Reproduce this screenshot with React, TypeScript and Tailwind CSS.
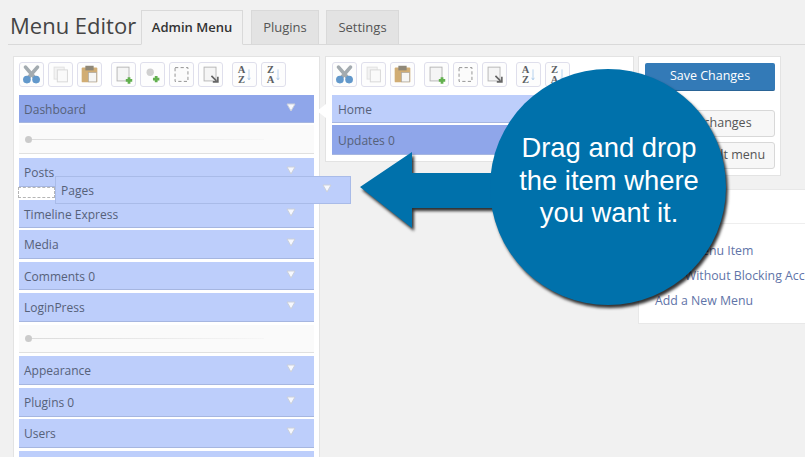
const sans = "font-['Open_Sans','Noto_Sans',sans-serif]";

function Scissors() {
  return (
    <svg viewBox="0 0 25 25" className="w-[25px] h-[25px]">
      <path d="M6 4.5l10 11.5M19 4.5L9 16" stroke="#a3abb0" strokeWidth="4" strokeLinecap="round" />
      <circle cx="7.5" cy="18" r="4.2" fill="#6298cb" />
      <circle cx="17.5" cy="18" r="4.2" fill="#6298cb" />
    </svg>
  );
}

function Copy() {
  return (
    <svg viewBox="0 0 25 25" className="w-[25px] h-[25px]">
      <rect x="5.5" y="4.5" width="11" height="13" fill="#f3f3f3" stroke="#e0e0e0" />
      <rect x="9" y="7.5" width="11" height="13" fill="#fafafa" stroke="#d6d6d6" />
    </svg>
  );
}

function Paste() {
  return (
    <svg viewBox="0 0 25 25" className="w-[25px] h-[25px]">
      <rect x="4" y="5" width="17" height="16" rx="1" fill="#d1ad74" />
      <rect x="8" y="3" width="9" height="5" fill="#8f8878" />
      <rect x="11.5" y="10.5" width="8.5" height="10" fill="#f6f6f4" stroke="#a3a3a3" strokeWidth="0.6" />
    </svg>
  );
}

function NewPage() {
  return (
    <svg viewBox="0 0 25 25" className="w-[25px] h-[25px]">
      <rect x="5.5" y="4.5" width="13" height="15" fill="#f5f5f5" stroke="#b4b4b4" />
      <path d="M15 19h7M18.5 15.5v7" stroke="#62b04e" strokeWidth="3" />
    </svg>
  );
}

function NewSeparator() {
  return (
    <svg viewBox="0 0 25 25" className="w-[25px] h-[25px]">
      <circle cx="10" cy="10" r="4" fill="#d0d0d0" />
      <path d="M13 17.5h7M16.5 14v7" stroke="#62b04e" strokeWidth="3" />
    </svg>
  );
}

function Dashed() {
  return (
    <svg viewBox="0 0 25 25" className="w-[25px] h-[25px]">
      <rect x="5.5" y="5" width="14" height="15" fill="#fbfbfb" stroke="#8c8c8c" strokeDasharray="3.5 2.5" />
    </svg>
  );
}

function MovePage() {
  return (
    <svg viewBox="0 0 25 25" className="w-[25px] h-[25px]">
      <rect x="5.5" y="4.5" width="13" height="15" fill="#f5f5f5" stroke="#b4b4b4" />
      <path d="M13.5 14l5.5 5.5M20.5 15v5.5H15" stroke="#666" strokeWidth="1.8" fill="none" />
    </svg>
  );
}

function Sort({ top, bottom }: { top: string; bottom: string }) {
  return (
    <div className="w-[25px] h-[25px] flex items-center justify-center gap-[2px]">
      <div className="flex flex-col items-center font-['Liberation_Serif',serif] font-bold text-[10.5px] leading-[10px] text-[#5c5f63]">
        <span>{top}</span>
        <span>{bottom}</span>
      </div>
      <svg viewBox="0 0 5 16" className="w-[4px] h-[16px]">
        <path d="M2.5 1v13M.8 11.5l1.7 2.5 1.7-2.5" stroke="#a5c6ea" strokeWidth="1" fill="none" />
      </svg>
    </div>
  );
}

function Tool({ children, last }: { children: React.ReactNode; last?: boolean }) {
  return (
    <div className={`w-[25px] h-[25px] border border-[#dfdfec] rounded-[3px] bg-[#fdfdfd] flex items-center justify-center overflow-hidden ${last ? "mr-[9px]" : "mr-[4px]"}`}>
      {children}
    </div>
  );
}

function Chevron() {
  return (
    <svg viewBox="0 0 10 9" className="w-[10px] h-[9px] shrink-0 -mt-[3px]">
      <path d="M1 1h8L5 8z" fill="#f6f8fe" stroke="#cbd0da" strokeWidth="1" strokeLinejoin="round" />
    </svg>
  );
}

function Item({ label, className, chevron = true }: { label: string; className: string; chevron?: boolean }) {
  return (
    <div className={`flex items-center justify-between pr-[18px] border-b border-[#a6b6e0] text-[12px] text-[#566179] ${className}`}>
      <span className="pt-[2px]">{label}</span>
      {chevron && <Chevron />}
    </div>
  );
}

function SliderBox({ className }: { className: string }) {
  return (
    <div className={`flex items-center pl-[6px] pr-[50px] bg-[#fafafa] border-b border-[#e0e0e0] ${className}`}>
      <div className="w-[7px] h-[7px] rounded-full bg-[#cbcbcb] shrink-0" />
      <div className="h-px flex-1 bg-linear-to-r from-[#dcdcdc] to-[#f6f6f6]" />
    </div>
  );
}

function SideButton({ label, className }: { label: string; className: string }) {
  return (
    <div className={`flex items-center justify-center border border-[#d8d8d8] rounded-[3px] bg-[#f7f7f7] text-[12.5px] text-[#555] ${className}`}>
      {label}
    </div>
  );
}

function Tab({ label, active, className }: { label: string; active?: boolean; className: string }) {
  return (
    <div
      className={`flex items-center justify-center h-[35px] border border-[#d9d9d9] text-[13px] ${
        active ? "bg-[#f1f1f1] border-b-[#f1f1f1] font-semibold text-[#333]" : "bg-[#e3e3e3] text-[#555]"
      } ${className}`}
    >
      {label}
    </div>
  );
}

export default function App() {
  return (
    <div className={`relative w-[805px] h-[457px] overflow-hidden bg-[#f1f1f1] ${sans}`}>
      <div className="h-[45px] pt-[10px] flex items-start border-b border-[#d9d9d9] ml-[8px] pl-[2px]">
        <h1 className="w-[131px] shrink-0 text-[22px] leading-[30px] text-[#444] whitespace-nowrap">Menu Editor</h1>
        <Tab label="Admin Menu" active className="w-[102px] mr-[8px]" />
        <Tab label="Plugins" className="w-[68px] mr-[7px]" />
        <Tab label="Settings" className="w-[73px]" />
      </div>

      <div className="flex items-start pl-[13px] pt-[11px]">
        <div className="w-[307px] h-[420px] bg-white border border-[#e3e3e3] px-[5px] pt-[5px] shrink-0">
          <div className="flex h-[25px] mb-[8px]">
            <Tool><Scissors /></Tool>
            <Tool><Copy /></Tool>
            <Tool last><Paste /></Tool>
            <Tool><NewPage /></Tool>
            <Tool><NewSeparator /></Tool>
            <Tool><Dashed /></Tool>
            <Tool last><MovePage /></Tool>
            <Tool><Sort top="A" bottom="Z" /></Tool>
            <Tool><Sort top="Z" bottom="A" /></Tool>
          </div>
          <Item label="Dashboard" className="pl-[5px] h-[28px] bg-[#8fa6ea] mb-[2px]" />
          <SliderBox className="h-[29px] mb-[4px]" />
          <Item label="Posts" className="pl-[5px] h-[29px] bg-[#bdcefb]" />
          <div className="w-[37px] h-[11px] -ml-px bg-white border border-dashed border-[#b5b5b5] mb-[2px]" />
          <Item label="Timeline Express" className="pl-[5px] h-[28px] bg-[#bdcefb] mb-[2px]" />
          <Item label="Media" className="pl-[5px] h-[29px] bg-[#bdcefb] mb-[3px]" />
          <Item label="Comments 0" className="pl-[5px] h-[28px] bg-[#bdcefb] mb-[3px]" />
          <Item label="LoginPress" className="pl-[5px] h-[29px] bg-[#bdcefb] mb-[3px]" />
          <SliderBox className="h-[28px] mb-[3px]" />
          <Item label="Appearance" className="pl-[5px] h-[29px] bg-[#bdcefb] mb-[3px]" />
          <Item label="Plugins 0" className="pl-[5px] h-[29px] bg-[#bdcefb] mb-[2px]" />
          <Item label="Users" className="pl-[5px] h-[29px] bg-[#bdcefb] mb-[3px]" />
          <Item label="" chevron={false} className="pl-[5px] h-[29px] bg-[#bdcefb]" />
        </div>

        <div className="relative w-[309px] h-[106px] ml-[5px] bg-white border border-[#e3e3e3] pl-[6px] pr-[6px] pt-[5px] shrink-0">
          <div className="absolute left-[-9px] top-[47px] w-0 h-0 border-y-[7px] border-y-transparent border-r-[9px] border-r-white" />
          <div className="flex h-[25px] mb-[8px]">
            <Tool><Scissors /></Tool>
            <Tool><Copy /></Tool>
            <Tool last><Paste /></Tool>
            <Tool><NewPage /></Tool>
            <Tool><Dashed /></Tool>
            <Tool last><MovePage /></Tool>
            <Tool><Sort top="A" bottom="Z" /></Tool>
            <Tool><Sort top="Z" bottom="A" /></Tool>
          </div>
          <Item label="Home" className="pl-[6px] h-[28px] bg-[#bdcefb] mb-[2px]" chevron={false} />
          <Item label="Updates 0" className="pl-[6px] h-[30px] bg-[#8fa6ea]" chevron={false} />
        </div>

        <div className="ml-[4px] shrink-0">
          <div className="w-[143px] h-[120px] bg-white border border-[#e3e3e3] pl-[6px] pt-[6px]">
            <div className="w-[130px] h-[28px] flex items-center justify-center rounded-[2px] bg-[#337ab7] border-b border-[#2a6496] text-[12.5px] text-white">
              Save Changes
            </div>
            <SideButton label="Undo changes" className="w-[130px] h-[27px] mt-[19px]" />
            <SideButton label="Load default menu" className="w-[130px] h-[27px] mt-[5px]" />
          </div>
          <div className="w-[200px] h-[135px] mt-[13px] bg-white border border-[#e8e8e8]">
            <div className="h-[34px] border-b border-[#eeeeee]" />
            <div className="pl-[16px] pt-[18px] flex flex-col gap-[7px] text-[12.3px] leading-[18px] text-[#5f74a8] whitespace-nowrap">
              <span>Add a Menu Item</span>
              <span>Save Without Blocking Access</span>
              <span>Add a New Menu</span>
            </div>
          </div>
        </div>
      </div>

      {/* dragged item */}
      <Item
        label="Pages"
        className="absolute left-[55px] top-[176px] w-[296px] h-[28px] pl-[5px] bg-[#bdcefb] border border-[#a9bbe8]"
      />

      {/* callout */}
      <svg viewBox="0 0 805 457" className="absolute left-0 top-0 w-[805px] h-[457px] drop-shadow-[2px_3px_1.5px_rgba(0,0,0,0.8)]">
        <path d="M360 187L412 152V173H520V208H412V228Z" fill="#0071ab" />
        <circle cx="608" cy="187" r="118" fill="#0071ab" />
      </svg>
      <div className="absolute left-[491px] top-[132px] w-[236px] text-center font-['Liberation_Sans',sans-serif] text-[27.4px] leading-[32.5px] text-white">
        Drag and drop
        <br />
        the item where
        <br />
        you want it.
      </div>
    </div>
  );
}
